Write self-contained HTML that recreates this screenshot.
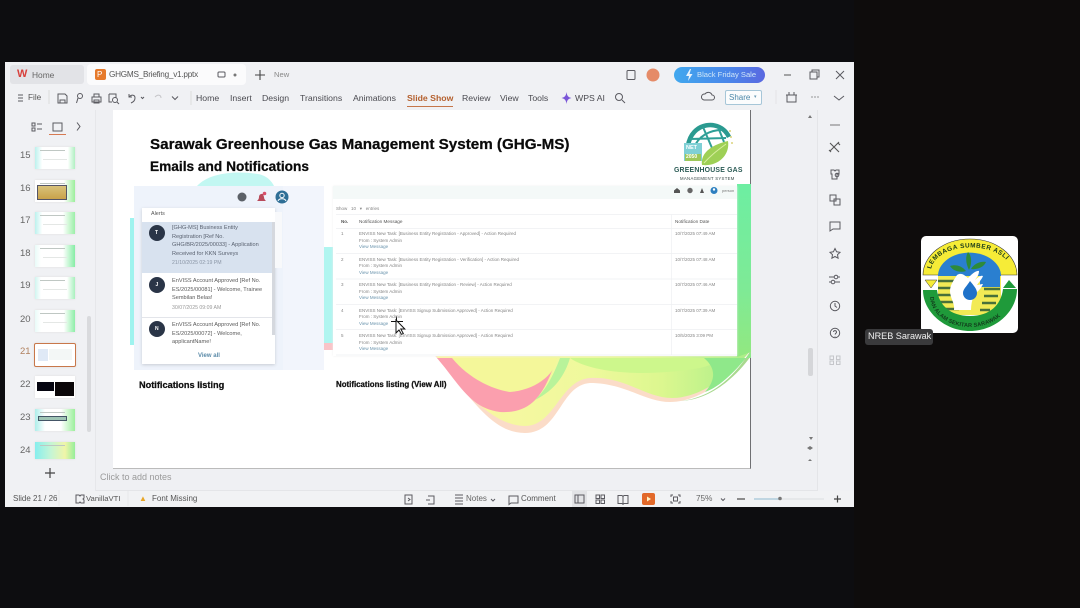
<!DOCTYPE html>
<html><head><meta charset="utf-8"><style>
html,body{margin:0;padding:0;background:#0d0d10;}
body{width:1080px;height:608px;position:relative;overflow:hidden;font-family:"Liberation Sans",sans-serif;}
.t{position:absolute;white-space:nowrap;line-height:1;color:#444;}
.b{position:absolute;}
svg{position:absolute;overflow:visible;}
.m{font-size:8.7px;color:#4a4a50;top:94px;}
.n{font-size:9.5px;color:#666;left:20px;}
.th{position:absolute;left:35px;width:40px;height:22px;background:#fff;box-shadow:0 0 2px #ddd;overflow:hidden;}
.th i{position:absolute;left:5px;top:3px;width:25px;height:1px;background:#bfc7c3;}
.th u{position:absolute;left:8px;top:12px;width:24px;height:1px;background:#e4e7e5;}
.c{font-size:4.5px;color:#858585;white-space:nowrap;position:absolute;line-height:1;}
.a{font-size:5.6px;color:#5a5a5a;position:absolute;line-height:8.5px;left:172px;white-space:nowrap;}
.i{fill:none;stroke:#5a5a60;stroke-width:1;}
.h{-webkit-text-stroke:.25px #0a0a0a;}
</style></head><body>
<div class="b" style="left:0;top:0;width:1080px;height:608px;background:#0d0d10"></div>
<div class="b" style="left:854px;top:0;width:226px;height:608px;background:#0e0c0c"></div>
<!-- window -->
<div class="b" style="left:5px;top:62px;width:849px;height:445px;background:#f0f1f4"></div>
<!-- tabs -->
<div class="b" style="left:10px;top:65px;width:74px;height:19px;background:#e2e3e7;border-radius:3px"></div>
<div class="b" style="left:87px;top:64px;width:159px;height:21px;background:#fbfbfc;border-radius:4px"></div>
<div class="t" style="left:17px;top:69px;font-size:11px;font-weight:bold;color:#d8403c">W</div>
<div class="t" style="left:32px;top:70.5px;font-size:8.4px;color:#666">Home</div>
<div class="b" style="left:95px;top:69px;width:11px;height:11px;background:#e67a2c;border-radius:2px"></div>
<div class="t" style="left:97px;top:71px;font-size:8px;color:#fff">P</div>
<div class="t" style="left:109px;top:70.5px;font-size:8.2px;letter-spacing:-.24px;color:#555">GHGMS_Briefing_v1.pptx</div>
<div class="t" style="left:274px;top:71px;font-size:7.6px;color:#888">New</div>
<svg style="left:0;top:0" width="1080" height="608">
<rect x="218" y="72" width="7" height="5" rx="1" class="i" stroke="#999"/><circle cx="235" cy="75" r="1.5" fill="#777"/>
<path d="M260 70v10M255 75h10" stroke="#444" stroke-width="1.1"/>
<rect x="627" y="70.5" width="8" height="9" rx="1" class="i" stroke-width="1.3"/>
<circle cx="653" cy="75" r="6.5" fill="#e58b68"/>
<path d="M784 75h7" stroke="#555"/><rect x="810" y="72" width="7" height="7" class="i"/><path d="M812 72v-2h7v7h-2" class="i"/>
<path d="M836 71l8 8M844 71l-8 8" class="i"/>
<!-- toolbar icons -->
<path d="M18 95h5M18 98h5M18 101h5" class="i" stroke-width=".8"/>
<path d="M58 94h7l2 2v7h-9zM60 100h5v3h-5z" class="i"/>
<circle cx="80" cy="96" r="2.5" class="i"/><path d="M78 98l-1.5 5" class="i"/>
<path d="M92 97h9v5h-9zM94 97v-3h5v3M94 100h5v3h-5z" class="i"/>
<path d="M109 94h7v4M109 94v8h3" class="i"/><circle cx="115" cy="100" r="2.5" class="i"/><path d="M117 102l2 2" class="i"/>
<path d="M129 97c3-3 6-2 6 1s-2 4-4 5M129 94v3h3" class="i"/><path d="M141 97l1.5 1.5l1.5-1.5" class="i"/>
<path d="M155 97c3-3 6-2 6 1" fill="none" stroke="#c5c5c8"/>
<path d="M172 96.5l3 3l3-3" class="i"/>
<path d="M191 91v14M49 90v14" stroke="#ddd"/>
<path d="M566.5 92c.6 4 1.5 5 5 6c-3.5 1-4.4 2-5 6c-.6-4-1.5-5-5-6c3.5-1 4.4-2 5-6z" fill="#7a56d8"/>
<circle cx="619" cy="97" r="3.5" class="i"/><path d="M622 100l3 3" class="i"/>
<path d="M704 100a3 3 0 0 1 1-6a4 4 0 0 1 7 1a2.5 2.5 0 0 1 0 5z" class="i"/>
<rect x="787" y="95" width="9" height="7" class="i"/><path d="M786 95h11M789 92v3M794 92v3" class="i"/>
<circle cx="812" cy="97" r=".6" fill="#555"/><circle cx="815" cy="97" r=".6" fill="#555"/><circle cx="818" cy="97" r=".6" fill="#555"/>
<path d="M834 96l5 4l5-4" class="i"/>
<path d="M776 90v14" stroke="#e4e4e6"/>
<!-- panel toggles -->
<path d="M32 123h3v3h-3zM32 128h3v3h-3zM37 124h5M37 129h5" class="i" stroke-width=".8"/>
<rect x="53" y="123" width="9" height="8" class="i"/><path d="M49 134.5h17" stroke="#d67a52" stroke-width="1"/>
<path d="M77 122.5l3 4l-3 4" class="i"/>
<path d="M45 473h10M50 468v10" stroke="#444" stroke-width="1.2"/>
</svg>
<div class="t m" style="left:28px;color:#555;font-size:8.2px">File</div>
<div class="t m" style="left:196px">Home</div>
<div class="t m" style="left:230px">Insert</div>
<div class="t m" style="left:262px">Design</div>
<div class="t m" style="left:300px">Transitions</div>
<div class="t m" style="left:353px">Animations</div>
<div class="t m" style="left:407px;font-weight:bold;color:#b4602e">Slide Show</div>
<div class="b" style="left:407px;top:106px;width:46px;height:1px;background:#c5764a"></div>
<div class="t m" style="left:462px">Review</div>
<div class="t m" style="left:500px">View</div>
<div class="t m" style="left:528px">Tools</div>
<div class="t m" style="left:575px">WPS AI</div>
<div class="b" style="left:725px;top:90px;width:37px;height:15px;box-sizing:border-box;border:1px solid #a6c6d8;border-radius:2px;background:#fbfcfd"></div>
<div class="t" style="left:729px;top:93.5px;font-size:8px;color:#4a87a8">Share</div>
<div class="t" style="left:754px;top:95px;font-size:5px;color:#6a9ab5">▾</div>
<div class="b" style="left:674px;top:67px;width:91px;height:16px;border-radius:8px;background:linear-gradient(90deg,#41a8ee,#4a86ea 60%,#5a68e0)"></div>
<svg style="left:0;top:0" width="1080" height="608"><path d="M690 69l-4 7h3l-1 5l4.5-7h-3l1.5-5z" fill="#e8f4fd"/></svg>
<div class="t" style="left:697px;top:71px;font-size:7.6px;color:#cfe6f8">Black Friday Sale</div>
<div class="b" style="left:96px;top:110px;width:722px;height:381px;background:#eff0f3"></div>
<div class="b" style="left:95px;top:110px;width:1px;height:381px;background:#e6e7ea"></div>
<div class="b" style="left:817px;top:110px;width:1px;height:381px;background:#e4e5e8"></div>
<div class="b" style="left:96px;top:490px;width:721px;height:1px;background:#e4e5e8"></div>
<div class="b" style="left:5px;top:491px;width:849px;height:16px;background:#f1f2f4"></div>
<!-- thumbnails -->
<div class="t n" style="top:151px">15</div><div class="t n" style="top:184px">16</div><div class="t n" style="top:216px">17</div><div class="t n" style="top:249px">18</div><div class="t n" style="top:281px">19</div><div class="t n" style="top:315px">20</div><div class="t n" style="top:347px;color:#b0805e">21</div><div class="t n" style="top:380px">22</div><div class="t n" style="top:413px">23</div><div class="t n" style="top:446px">24</div>
<div class="th" style="top:147px;background:linear-gradient(90deg,#bcf2ee,#fff 18%,#fff 82%,#b0f0c2)"><i></i><u></u></div>
<div class="th" style="top:180px;background:linear-gradient(90deg,#fff,#fff 72%,#9cef9c)"><i></i><div class="b" style="left:2px;top:5px;width:28px;height:13px;background:linear-gradient(180deg,#d9c27a,#c9a24a);border:1px solid #556"></div></div>
<div class="th" style="top:212px;background:linear-gradient(90deg,#bcf2ee,#fff 18%,#fff 70%,#9cefa8)"><i></i><u></u></div>
<div class="th" style="top:245px;background:linear-gradient(90deg,#e8fbf8,#fff 15%,#fff 70%,#86eda5)"><i></i><u></u></div>
<div class="th" style="top:277px;background:linear-gradient(90deg,#d0f5f0,#fff 15%,#fff 80%,#a8f0bd)"><i></i><u></u></div>
<div class="th" style="top:310px;background:linear-gradient(90deg,#e8fbf8,#fff 15%,#fff 72%,#8eeea8)"><i></i><u></u></div>
<div class="th" style="top:343px;border:1px solid #c8774a;left:33.5px;border-radius:2px;height:22px;width:40px"><div class="b" style="left:3px;top:5px;width:10px;height:12px;background:#dfe9f6"></div><div class="b" style="left:14px;top:5px;width:23px;height:11px;background:#f3f7f6"></div></div>
<div class="th" style="top:376px"><div class="b" style="left:2px;top:6px;width:17px;height:9px;background:#050510"></div><div class="b" style="left:20px;top:6px;width:19px;height:14px;background:#0a0608"></div></div>
<div class="th" style="top:409px;background:linear-gradient(90deg,#aeeeea,#fff 25%,#fff 65%,#9cef9c)"><i></i><div class="b" style="left:3px;top:7px;width:27px;height:3px;background:#9fc5b5;border:1px solid #456"></div></div>
<div class="th" style="top:442px;height:17px;background:linear-gradient(90deg,#86eeee,#c5f5d5 40%,#f0f5a8 75%,#96ee9a)"><i></i></div>
<div class="b" style="left:87px;top:316px;width:4px;height:116px;background:#d9dadd;border-radius:2px"></div>
<div class="b" style="left:808px;top:348px;width:5px;height:28px;background:#d5d6d9;border-radius:2px"></div>
<!-- slide -->
<div class="b" style="left:113px;top:110px;width:637px;height:358px;background:#fff;border-right:1.5px solid #6f7072;border-bottom:1.5px solid #bbb"></div>
<svg style="left:0;top:0" width="1080" height="608">
<defs>
<linearGradient id="gr" x1="0" y1="0" x2="1" y2="0"><stop offset="0" stop-color="#fdf6a4"/><stop offset=".5" stop-color="#eef99c"/><stop offset=".72" stop-color="#dcf78f"/><stop offset="1" stop-color="#a8ee88"/></linearGradient>
<linearGradient id="gb" x1="0" y1="0" x2="0" y2="1"><stop offset="0" stop-color="#6deea2"/><stop offset=".6" stop-color="#7eea96"/><stop offset="1" stop-color="#92e880"/></linearGradient>
</defs>
<path d="M430 350C470 395 490 433 525 433C560 433 560 385 590 383C625 383 645 402 670 402C700 402 730 378 751 350Z" fill="#fbdcc8"/>
<path d="M432 350C465 395 495 426 525 426C555 426 560 380 590 378C625 376 645 398 672 398C700 398 730 376 751 350V300H432Z" fill="url(#gr)"/>
<path d="M437 358C460 385 470 408 500 412C535 414 545 390 557 358Z" fill="#fb9fae"/>
<path d="M452 358C470 380 495 390 510 392C535 390 555 375 557 358Z" fill="#f4f79a"/>
<path d="M560 358C550 385 540 395 535 400C555 390 565 375 570 358Z" fill="#b8f39a"/>
<path d="M570 358C590 372 640 378 700 368C715 364 725 360 730 358Z" fill="#cdf78c"/>
<path d="M680 401C712 398 735 376 751 350V356C735 378 710 400 680 401Z" fill="#a9d98f"/>
<path d="M704 358H751V352C738 368 722 386 705 392C716 380 716 368 704 358Z" fill="#8fe88a"/>
<path d="M197 186C208 174 232 170 258 174C268 176 272 182 274 186Z" fill="#c2f7f2"/>
<path d="M130 218h4v127h-4z" fill="#9ef3ef"/>
<path d="M737 184H751V352L737 357Z" fill="url(#gb)"/>
<path d="M324 247h9v96h-9z" fill="#b0f5f0"/>
<path d="M324 343h9v7h-9z" fill="#f9c4c8"/>
</svg>
<div class="t h" style="left:150px;top:137px;font-size:15.2px;font-weight:bold;color:#0a0a0a">Sarawak Greenhouse Gas Management System (GHG-MS)</div>
<div class="t h" style="left:150px;top:160px;font-size:13.7px;font-weight:bold;color:#0a0a0a">Emails and Notifications</div>
<!-- logo -->
<svg style="left:0;top:0" width="1080" height="608">
<path d="M688 146C691 122 720 118 729 137" fill="none" stroke="#2a9a90" stroke-width="4.5"/>
<path d="M694 148C698 136 710 130 722 130M703 127L712 148M718 127L724 142M690 139L726 138" fill="none" stroke="#2f9f97" stroke-width="2"/>
<path d="M702 165C700 152 714 144 728 141C730 154 720 164 708 165C705 165.5 703 165 702 165Z" fill="#9ed056"/>
<path d="M704 163C711 155 718 150 726 144" stroke="#d7ee9f" fill="none"/>
<rect x="684" y="143" width="18" height="18" fill="#7fd0d5"/><rect x="685" y="154" width="16" height="7" fill="#9ec85a"/>
<circle cx="730" cy="131" r="1" fill="#dcd47d"/><circle cx="731" cy="137" r="1" fill="#dcd47d"/><circle cx="732" cy="143" r="1" fill="#dcd47d"/>
</svg>
<div class="t" style="left:686px;top:145.5px;font-size:5.5px;font-weight:bold;color:#fff">NET</div>
<div class="t" style="left:686px;top:155px;font-size:5px;font-weight:bold;color:#fff">2050</div>
<div class="t" style="left:674px;top:168px;font-size:6.9px;font-weight:bold;color:#2b5b55;letter-spacing:.2px">GREENHOUSE GAS</div>
<div class="t" style="left:680px;top:176.5px;font-size:4.3px;color:#3a4a48;letter-spacing:.3px">MANAGEMENT SYSTEM</div>
<!-- left panel -->
<div class="b" style="left:134px;top:186px;width:190px;height:184px;background:#eef3fb"></div>
<div class="b" style="left:283px;top:186px;width:41px;height:184px;background:#f2f5fc"></div>
<svg style="left:0;top:0" width="1080" height="608">
<circle cx="242" cy="197" r="4.5" fill="#5c6168"/><path d="M263 194a3 3 0 0 0-4 3c0 2-1 3-2 4h9c-1-1-2-2-2-4z" fill="#b84a5a"/><circle cx="264.5" cy="193.5" r="1.8" fill="#d8506a"/>
<circle cx="282" cy="197" r="6.5" fill="#2f6f96"/><circle cx="282" cy="195.5" r="2.2" fill="none" stroke="#fff"/><path d="M278 201c1-3 7-3 8 0" fill="none" stroke="#fff"/>
</svg>
<div class="b" style="left:142px;top:208px;width:133px;height:156px;background:#fff;box-shadow:0 1px 3px #c8ccd4"></div>
<div class="b" style="left:275px;top:212px;width:7px;height:56px;background:#f8f9fb"></div>
<div class="b" style="left:142px;top:222px;width:130px;height:51px;background:#d8e2ef"></div>
<div class="b" style="left:272px;top:222px;width:2.5px;height:113px;background:#d5d8de"></div>
<div class="b" style="left:142px;top:317px;width:130px;height:1px;background:#e3e5ea"></div>
<div class="t" style="left:151px;top:212px;font-size:5.4px;color:#555">Alerts</div>
<div class="a" style="top:224px;color:#5a6270">[GHG-MS] Business Entity<br>Registration [Ref No.<br>GHG/BR/2025/00033] - Application<br>Received for KKN Surveys</div>
<div class="t" style="left:172px;top:261px;font-size:5.2px;color:#8a95a5">21/10/2025 02:19 PM</div>
<div class="a" style="top:277px">EnVISS Account Approved [Ref No.<br>ES/2025/00081] - Welcome, Trainee<br>Sembilan Belas!</div>
<div class="t" style="left:172px;top:306px;font-size:5.2px;color:#9a9a9a">30/07/2025 09:09 AM</div>
<div class="a" style="top:321px">EnVISS Account Approved [Ref No.<br>ES/2025/00072] - Welcome,<br>applicantName!</div>
<div class="t" style="left:198px;top:353px;font-size:6px;font-weight:bold;color:#5a8aa8">View all</div>
<svg style="left:0;top:0" width="1080" height="608">
<circle cx="157" cy="233" r="8" fill="#2a3547"/><circle cx="157" cy="285" r="8" fill="#2a3547"/><circle cx="157" cy="329" r="8" fill="#2a3547"/>
</svg>
<div class="t" style="left:155px;top:230.5px;font-size:5px;font-weight:bold;color:#fff">T</div>
<div class="t" style="left:155.5px;top:282.5px;font-size:5px;font-weight:bold;color:#fff">J</div>
<div class="t" style="left:155px;top:326.5px;font-size:5px;font-weight:bold;color:#fff">N</div>
<div class="t h" style="left:139px;top:381px;font-size:9.2px;font-weight:bold;color:#111">Notifications listing</div>
<!-- right panel -->
<div class="b" style="left:333px;top:186px;width:404px;height:170px;background:#fff;box-shadow:0 0 2px #eee"></div>
<div class="b" style="left:333px;top:186px;width:404px;height:13px;background:#f4f9f8"></div>
<svg style="left:0;top:0" width="1080" height="608">
<path d="M674 190.5l3-2.5l3 2.5v2.5h-6z" fill="#555"/><circle cx="690" cy="190.5" r="2.7" fill="#666"/><path d="M700 193l2-5l2 5z" fill="#555"/><circle cx="714" cy="190.5" r="3.5" fill="#2d7fc0"/><circle cx="714" cy="189.5" r="1.2" fill="#fff"/>
<g stroke="#eef0f2" stroke-width=".7"><path d="M336 214.5H737M336 228.5H737M336 253.5H737M336 279H737M336 304.5H737M336 329.5H737M336 355H737M671.5 214.5V355"/></g>
<path d="M391 321.5h12M396.5 316.5v9" stroke="#111" stroke-width="1"/>
<path d="M396 320v13l3-3l2.5 4.5l1.8-1l-2.5-4.5h4z" fill="#fff" stroke="#111" stroke-width="1"/>
</svg>
<div class="t" style="top:188.5px;font-size:4px;color:#777;left:722px">person</div>
<div class="c" style="left:336px;top:207px">Show &nbsp; 10 &nbsp; ▾ &nbsp; entries</div>
<div class="c" style="left:341px;top:219.5px;font-weight:bold;color:#555">No.</div>
<div class="c" style="left:359px;top:219.5px;font-size:4.7px;color:#555">Notification Message</div>
<div class="c" style="left:675px;top:219.5px;font-size:4.7px;color:#555">Notification Date</div>
<div class="c" style="left:341px;top:232px">1</div><div class="c" style="left:359px;top:232px">ENVISS New Task: [Business Entity Registration - Approved] - Action Required</div><div class="c" style="left:359px;top:238.5px">From : System Admin</div><div class="c" style="left:359px;top:245px;color:#6a94ad">View Message</div><div class="c" style="left:675px;top:232px">10/7/2025 07:49 AM</div>
<div class="c" style="left:341px;top:257.5px">2</div><div class="c" style="left:359px;top:257.5px">ENVISS New Task: [Business Entity Registration - Verification] - Action Required</div><div class="c" style="left:359px;top:264px">From : System Admin</div><div class="c" style="left:359px;top:270.5px;color:#6a94ad">View Message</div><div class="c" style="left:675px;top:257.5px">10/7/2025 07:48 AM</div>
<div class="c" style="left:341px;top:283px">3</div><div class="c" style="left:359px;top:283px">ENVISS New Task: [Business Entity Registration - Review] - Action Required</div><div class="c" style="left:359px;top:289.5px">From : System Admin</div><div class="c" style="left:359px;top:296px;color:#6a94ad">View Message</div><div class="c" style="left:675px;top:283px">10/7/2025 07:46 AM</div>
<div class="c" style="left:341px;top:308.5px">4</div><div class="c" style="left:359px;top:308.5px">ENVISS New Task: [EnVISS Signup Submission Approved] - Action Required</div><div class="c" style="left:359px;top:315px">From : System Admin</div><div class="c" style="left:359px;top:321.5px;color:#6a94ad">View Message</div><div class="c" style="left:675px;top:308.5px">10/7/2025 07:39 AM</div>
<div class="c" style="left:341px;top:334px">5</div><div class="c" style="left:359px;top:334px">ENVISS New Task: [EnVISS Signup Submission Approved] - Action Required</div><div class="c" style="left:359px;top:340.5px">From : System Admin</div><div class="c" style="left:359px;top:347px;color:#6a94ad">View Message</div><div class="c" style="left:675px;top:334px">10/5/2025 3:09 PM</div>
<div class="t h" style="left:336px;top:381px;font-size:7.9px;font-weight:bold;color:#111">Notifications listing (View All)</div>
<!-- notes + status -->
<div class="t" style="left:100px;top:473px;font-size:9px;color:#9a9a9a">Click to add notes</div>
<div class="t" style="left:13px;top:495px;font-size:8px;color:#555">Slide 21 / 26</div>
<div class="t" style="left:86px;top:495px;font-size:7.7px;color:#555">VanillaVTI</div>
<div class="t" style="left:139px;top:494.5px;font-size:8px;color:#e8a628">▲</div>
<div class="t" style="left:152px;top:495px;font-size:8px;color:#555">Font Missing</div>
<div class="t" style="left:466px;top:495px;font-size:8px;color:#666">Notes</div>
<div class="t" style="left:521px;top:495px;font-size:8px;color:#555">Comment</div>
<div class="t" style="left:696px;top:495px;font-size:8.2px;color:#666">75%</div>
<div class="b" style="left:572px;top:491px;width:15px;height:16px;background:#e2e3e6"></div>
<div class="b" style="left:642px;top:493px;width:13px;height:12px;background:#e2692a;border-radius:2px"></div>
<svg style="left:0;top:0" width="1080" height="608">
<path d="M76 495h3l1 1l1-1h3v3l-1 1l1 1v3h-3l-1-1l-1 1h-3z" class="i"/>
<rect x="405" y="495" width="7" height="9" class="i"/><path d="M408 498l2 1.5l-2 1.5" class="i"/>
<path d="M428 496h6v8h-6M430 500h-4" class="i"/>
<path d="M455 495h8M455 501h8M455 504h8M455 498h8" class="i" stroke-width=".7"/>
<path d="M491 499l2 2l2-2" class="i"/>
<path d="M509 496h9v7h-7l-2 1.5z" class="i"/>
<rect x="575" y="495" width="9" height="8" class="i"/><path d="M578 495v8" class="i"/>
<path d="M596 495h3.5v3.5h-3.5zM601 495h3.5v3.5h-3.5zM596 500h3.5v3.5h-3.5zM601 500h3.5v3.5h-3.5z" class="i"/>
<path d="M618 495.5h4l1 1l1-1h4v8h-4l-1 .8l-1-.8h-4zM623 496.5v7" class="i"/>
<path d="M647 496.5l4 2.5l-4 2.5z" fill="#fff3c4"/>
<path d="M671 497v-2h2M678 495h2v2M680 501v2h-2M673 503h-2v-2" class="i"/><rect x="673.5" y="497" width="4" height="4" class="i"/>
<path d="M721 498.5l2 2l2-2" class="i"/>
<path d="M737 499h8" stroke="#555" stroke-width="1.3"/>
<path d="M754 499h25" stroke="#8fb9d0" stroke-width="1"/><path d="M779 499h45" stroke="#dcdde0" stroke-width="1"/><circle cx="780" cy="498.5" r="1.8" fill="#777"/>
<path d="M834 499h7M837.5 495.5v7" stroke="#444" stroke-width="1.2"/>
<path d="M59 490v16M128 491v15" stroke="#e5e5e8" stroke-width=".8"/>
<path d="M810 115l-2 3h4zM811 440l-2-3h4zM807 448l3 2l3-2l-3-2zM807 458h6M808 461l2-2l2 2" fill="#777" stroke="none"/>
<!-- side icons -->
<path d="M830 125h10" stroke="#777"/>
<path d="M830 143l9 9M839 142l-9 9M829 150l2 2M838 143l2 2" fill="none" stroke="#555" stroke-width="1.1"/>
<path d="M831 170h3l1 1l1-1h3v4h-2v5h-5v-5h-1z" class="i"/><circle cx="837" cy="175" r="1.8" class="i"/>
<rect x="830" y="195" width="6" height="6" class="i"/><rect x="834" y="199" width="6" height="6" class="i"/>
<path d="M830 222h10v7h-7l-3 2z" class="i"/>
<path d="M835 248.5l1.6 3.3l3.4.5l-2.5 2.4l.6 3.5l-3.1-1.7l-3.1 1.7l.6-3.5l-2.5-2.4l3.4-.5z" class="i"/>
<path d="M829 277h5M838 277h2M829 282h2M835 282h5" class="i"/><circle cx="836" cy="277" r="1.8" class="i"/><circle cx="833" cy="282" r="1.8" class="i"/>
<circle cx="835" cy="306" r="4.7" class="i"/><path d="M835 303v3l2 1.5" class="i"/>
<circle cx="835" cy="333" r="4.7" class="i"/><path d="M833.5 332a1.5 1.5 0 1 1 2 1.5l-.5 1M835 336v.5" class="i"/>
<path d="M830 356h3.5v3.5h-3.5zM836.5 356h3.5v3.5h-3.5zM830 361h3.5v3.5h-3.5zM836.5 361h3.5v3.5h-3.5z" fill="none" stroke="#c5c6ca"/>
</svg>
<!-- participant tile -->
<div class="b" style="left:921px;top:236px;width:97px;height:97px;background:#fff;border-radius:5px"></div>
<svg style="left:0;top:0" width="1080" height="608">
<defs>
<path id="topa" d="M931 271A39 23 0 0 1 1011 271"/>
<path id="bota" d="M930 296A40 31 0 0 0 1010 296"/>
</defs>
<path d="M923 275A47 36 0 0 1 1017 275Z" fill="#f6ec37" stroke="#333" stroke-width=".6"/>
<path d="M938 276A31 23 0 0 1 1001 276Z" fill="#2a7fd0"/>
<rect x="938" y="276" width="63" height="39" fill="#f2ea55"/>
<path d="M938 281h18M938 288h18M938 295h20M940 302h18M943 309h16M984 289h16M984 296h14M982 303h14M980 310h10" stroke="#48703a" stroke-width="2.6"/>
<path d="M980 276h20v11h-20z" fill="#2a7fd0"/>
<path d="M923 290H937C939 305 950 316 970 316C990 316 1001 305 1003 289H1017C1017 312 995 331 970 331C945 331 923 312 923 290Z" fill="#1f9a3a"/>
<path d="M925 280h12l-6 8z" fill="#f6ec37" stroke="#333" stroke-width=".5"/>
<path d="M1003 288l6-8l7 8z" fill="#1f9a3a"/>
<path d="M968 252c4 4 4 12 1 18c-3-6-4-13-1-18z" fill="#2d8a3a"/>
<path d="M950 266c6-2 12 0 16 5c-6 2-13 0-16-5zM986 262c-6-1-12 2-15 7c6 1 13-2 15-7z" fill="#2d8a3a"/>
<path d="M957 275c5-3 8 1 11 3c3-3 8-8 11-7c0 4-2 6-4 9c3-3 6-5 8-4c-1 3-4 6-6 9c2 0 4-1 6-1c-2 5-6 8-9 11c-2 5-3 10-3 15h-17c1-7-4-12-4-19c0-6 4-11 7-16z" fill="#fff"/>
<path d="M970 281c4 5 7 8 7 12a7 7 0 0 1-14 0c0-4 4-7 7-12z" fill="#1f72c9"/>
<text font-family="Liberation Sans" font-size="6.4" font-weight="bold" fill="#1a3a1a" letter-spacing=".5"><textPath href="#topa" startOffset="2">LEMBAGA SUMBER ASLI</textPath></text>
<text font-family="Liberation Sans" font-size="5.6" font-weight="bold" fill="#123c1c" letter-spacing=".1"><textPath href="#bota" startOffset="1">DAN ALAM SEKITAR SARAWAK</textPath></text>
</svg>
<div class="b" style="left:865px;top:329px;width:68px;height:16px;background:#3a3a3c;border-radius:3px"></div>
<div class="t" style="left:868px;top:332px;font-size:9.1px;color:#f0f0f0">NREB Sarawak</div>
</body></html>
